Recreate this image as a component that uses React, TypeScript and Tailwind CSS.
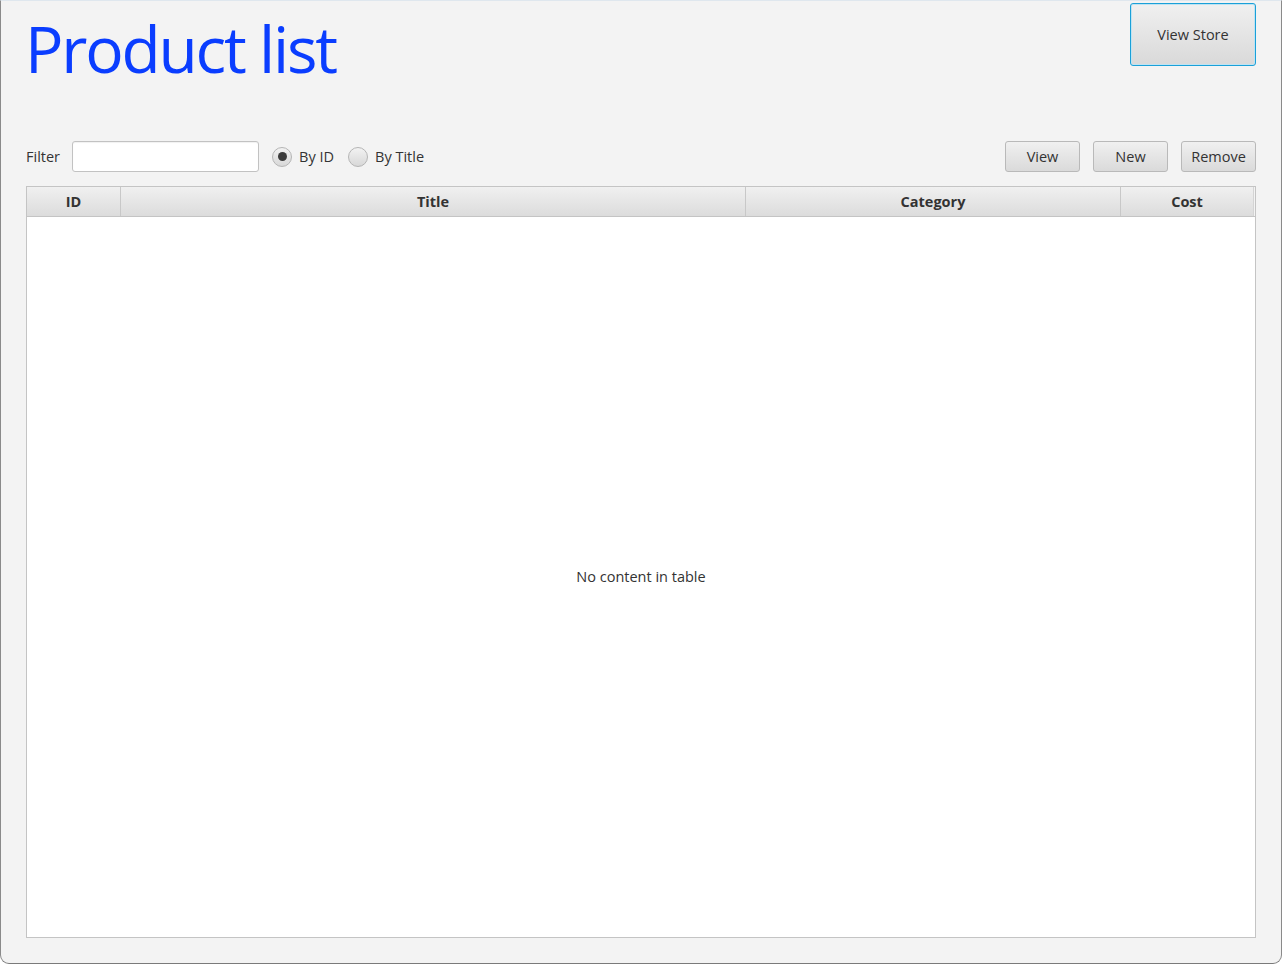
import React from 'react'

const font = { fontFamily: '"Open Sans", "Noto Sans", Arial, sans-serif' }

const columns = [
  { name: 'ID', width: 'w-[94px]' },
  { name: 'Title', width: 'w-[625px]' },
  { name: 'Category', width: 'w-[375px]' },
  { name: 'Cost', width: 'w-[133px]' },
]

function Button({ label, className = '' }: { label: string; className?: string }) {
  return (
    <button
      className={
        'h-[31px] rounded-[3px] border border-[#b9b9b9] bg-gradient-to-b from-[#f0f0f0] to-[#dadada] text-[14.5px] text-[#333] ' +
        className
      }
    >
      {label}
    </button>
  )
}

function Radio({ label, checked }: { label: string; checked?: boolean }) {
  return (
    <label className="flex items-center gap-[7px] text-[14.5px] text-[#333]">
      <span className="flex h-[20px] w-[20px] items-center justify-center rounded-full border border-[#b5b5b5] bg-gradient-to-b from-[#f2f2f2] to-[#d8d8d8]">
        {checked && <span className="h-[9px] w-[9px] rounded-full bg-[#3c3c3c]" />}
      </span>
      {label}
    </label>
  )
}

export default function App() {
  return (
    <div
      style={font}
      className="flex h-[964px] w-[1282px] flex-col rounded-b-[9px] border-x border-b border-t border-x-[#8a8a8a] border-b-[#7a7a7a] border-t-[#dfe7ee] bg-[#f3f3f3] px-[25px]"
    >
      <div className="flex h-[140px] items-start justify-between pt-[2px]">
        <h1 className="ml-[-1px] mt-[14px] text-[64px] leading-none tracking-[-2.2px] text-[#0a3dff]">Product list</h1>
        <button className="h-[63px] w-[126px] rounded-[3px] border border-[#1aa0d8] bg-gradient-to-b from-[#f0f0f0] to-[#d9d9d9] text-[14.5px] text-[#333] shadow-[inset_0_0_0_1px_#bfe3f2]">
          View Store
        </button>
      </div>

      <div className="flex h-[31px] items-center">
        <span className="text-[14.5px] text-[#333]">Filter</span>
        <input className="ml-[12px] h-[31px] w-[187px] rounded-[3px] border border-[#c2c2c2] bg-white shadow-[inset_0_1px_1px_rgba(0,0,0,0.06)] outline-none" />
        <div className="ml-[13px] flex items-center gap-[14px]">
          <Radio label="By ID" checked />
          <Radio label="By Title" />
        </div>
        <div className="ml-auto flex gap-[13px]">
          <Button label="View" className="w-[75px]" />
          <Button label="New" className="w-[75px]" />
          <Button label="Remove" className="w-[75px]" />
        </div>
      </div>

      <div className="mt-[14px] flex h-[752px] flex-col border border-[#c4c4c4] bg-white">
        <div className="flex h-[30px] border-b border-[#c4c4c4] bg-[#f3f3f3]">
          {columns.map((c, i) => (
            <div
              key={c.name}
              className={
                c.width +
                ' flex items-center justify-center bg-gradient-to-b from-[#f0f0f0] to-[#dcdcdc] text-[14.5px] font-bold text-[#333] ' +
                (i < columns.length - 1 ? 'border-r border-[#c8c8c8]' : 'border-r border-[#d4d4d4]')
              }
            >
              {c.name}
            </div>
          ))}
        </div>
        <div className="flex flex-1 items-center justify-center text-[14.5px] text-[#333]">No content in table</div>
      </div>
    </div>
  )
}
